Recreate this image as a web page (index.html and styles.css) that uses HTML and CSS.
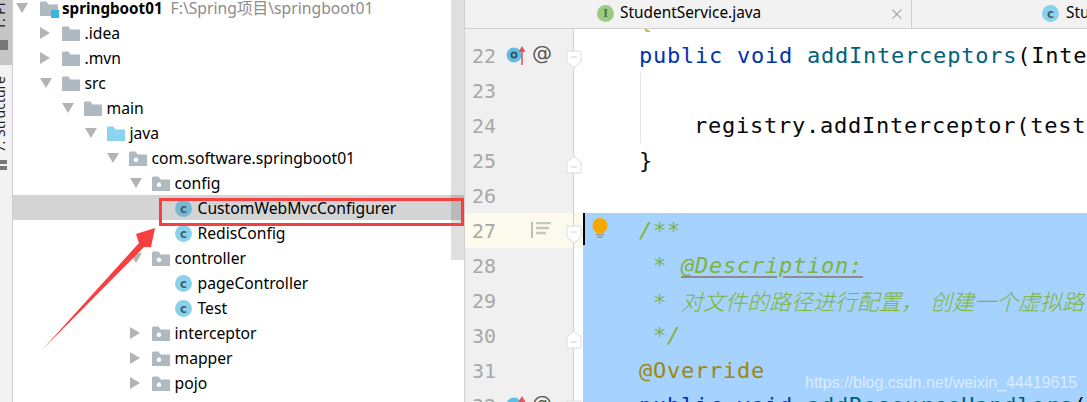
FILE: index.html
```html
<!DOCTYPE html>
<html lang="en">
<head>
<meta charset="utf-8">
<title>IDE</title>
<link rel="stylesheet" href="styles.css">
</head>
<body>
<svg class="sprite" aria-hidden="true">
  <symbol id="down" viewBox="0 0 12 10"><path d="M0 0H12L6 10Z"/></symbol>
  <symbol id="right" viewBox="0 0 10 12"><path d="M0 0V12L10 6Z"/></symbol>
  <symbol id="folder" viewBox="0 0 18 15"><path d="M0 1.5V15H18V3.5H8.5L6.5 .5H1Z"/></symbol>
  <symbol id="pkg" viewBox="0 0 18 15"><path fill-rule="evenodd" d="M0 1.5V15H18V3.5H8.5L6.5 .5H1ZM7 6.5a2.3 2.3 0 1 0 .01 0Z"/></symbol>
  <symbol id="foldd" viewBox="0 0 16 19"><path d="M1 1H15V12L8 18L1 12Z" fill="#fff" stroke="#dcdcdc"/><path d="M5 7H11" stroke="#cfcfcf"/></symbol>
  <symbol id="foldu" viewBox="0 0 16 19"><path d="M1 18H15V7L8 1L1 7Z" fill="#fff" stroke="#dcdcdc"/><path d="M5 12H11" stroke="#cfcfcf"/></symbol>
</svg>
<div class="app">
  <aside class="stripe">
    <div class="stripe-active">
      <span class="vtext">1: Project</span>
      <i class="stripe-ico"></i>
    </div>
    <div class="stripe-rest">
      <span class="vtext">7: Structure</span>
      <i class="stripe-dots"></i>
    </div>
  </aside>

  <section class="project">
    <div class="tree">
      <div class="row l0"><svg class="arrow ad"><use href="#down"/></svg><span class="ico mod"><svg class="fold grey"><use href="#folder"/></svg><i class="mod-badge"></i></span><b class="bold">springboot01</b><span class="path">F:\Spring项目\springboot01</span></div>
      <div class="row l1"><svg class="arrow ar"><use href="#right"/></svg><span class="ico"><svg class="fold grey"><use href="#folder"/></svg></span><span>.idea</span></div>
      <div class="row l1"><svg class="arrow ar"><use href="#right"/></svg><span class="ico"><svg class="fold grey"><use href="#folder"/></svg></span><span>.mvn</span></div>
      <div class="row l1"><svg class="arrow ad"><use href="#down"/></svg><span class="ico"><svg class="fold grey"><use href="#folder"/></svg></span><span>src</span></div>
      <div class="row l2"><svg class="arrow ad"><use href="#down"/></svg><span class="ico"><svg class="fold grey"><use href="#folder"/></svg></span><span>main</span></div>
      <div class="row l3"><svg class="arrow ad"><use href="#down"/></svg><span class="ico"><svg class="fold blue"><use href="#folder"/></svg></span><span>java</span></div>
      <div class="row l4"><svg class="arrow ad"><use href="#down"/></svg><span class="ico"><svg class="fold grey"><use href="#pkg"/></svg></span><span>com.software.springboot01</span></div>
      <div class="row l5"><svg class="arrow ad"><use href="#down"/></svg><span class="ico"><svg class="fold grey"><use href="#pkg"/></svg></span><span>config</span></div>
      <div class="row l6 selected"><span class="arrow"></span><span class="ico"><i class="cls dim">c</i></span><span>CustomWebMvcConfigurer</span></div>
      <div class="row l6"><span class="arrow"></span><span class="ico"><i class="cls">c</i></span><span>RedisConfig</span></div>
      <div class="row l5"><svg class="arrow ad"><use href="#down"/></svg><span class="ico"><svg class="fold grey"><use href="#pkg"/></svg></span><span>controller</span></div>
      <div class="row l6"><span class="arrow"></span><span class="ico"><i class="cls">c</i></span><span>pageController</span></div>
      <div class="row l6"><span class="arrow"></span><span class="ico"><i class="cls">c</i></span><span>Test</span></div>
      <div class="row l5"><svg class="arrow ar"><use href="#right"/></svg><span class="ico"><svg class="fold grey"><use href="#pkg"/></svg></span><span>interceptor</span></div>
      <div class="row l5"><svg class="arrow ar"><use href="#right"/></svg><span class="ico"><svg class="fold grey"><use href="#pkg"/></svg></span><span>mapper</span></div>
      <div class="row l5"><svg class="arrow ar"><use href="#right"/></svg><span class="ico"><svg class="fold grey"><use href="#pkg"/></svg></span><span>pojo</span></div>
    </div>
    <div class="thumb"></div>
  </section>

  <main class="editor">
    <nav class="tabs">
      <div class="tab tab-one"><i class="cls iface">I</i><span>StudentService.java</span><span class="close">×</span></div>
      <div class="tab tab-two"><i class="cls">c</i><span>StudentController.java</span></div>
    </nav>
    <div class="lines">
      <div class="line"><div class="gutter"></div><div class="code"><span class="brace">{</span></div></div>
      <div class="line"><div class="gutter"><span class="num">22</span><svg class="over" viewBox="0 0 22 20"><circle cx="8" cy="10" r="7.5" fill="#62bde3"/><circle cx="8" cy="10" r="2.6" fill="none" stroke="#33505f" stroke-width="1.8"/><path d="M16 20V6" stroke="#e0545f" stroke-width="1.6"/><path d="M12.5 7L16 1L19.5 7Z" fill="#e0545f"/></svg><span class="at">@</span><svg class="fi"><use href="#foldd"/></svg></div><div class="code"><span class="kw">public void</span> <span class="fn">addInterceptors</span>(Inte</div></div>
      <div class="line"><div class="gutter"><span class="num">23</span></div><div class="code"><span class="guide"></span></div></div>
      <div class="line"><div class="gutter"><span class="num">24</span></div><div class="code"><span class="guide"></span>    registry.addInterceptor(test</div></div>
      <div class="line"><div class="gutter"><span class="num">25</span><svg class="fi"><use href="#foldu"/></svg></div><div class="code">}</div></div>
      <div class="line"><div class="gutter"><span class="num">26</span></div><div class="code"></div></div>
      <div class="line current"><div class="gutter"><span class="num">27</span><svg class="impl" viewBox="0 0 20 16"><path d="M1 0V16" stroke="#b9c0b9" stroke-width="2"/><path d="M5 1H20M5 6H18M5 11H15" stroke="#c2c8c2" stroke-width="2.4"/></svg><svg class="fi"><use href="#foldd"/></svg></div><div class="code sel"><i class="caret"></i><svg class="bulb" viewBox="0 0 16 20"><path d="M8 0a7.5 7.5 0 0 0-4 13.8V15H12V13.8A7.5 7.5 0 0 0 8 0Z" fill="#f4a800"/><path d="M4 16.5H12M5 19H11" stroke="#8d9aa5" stroke-width="1.6"/></svg><span class="doc">/**</span></div></div>
      <div class="line"><div class="gutter"><span class="num">28</span></div><div class="code sel"><span class="doc"> * <u class="tag">@Description:</u></span></div></div>
      <div class="line"><div class="gutter"><span class="num">29</span></div><div class="code sel"><span class="doc"> * <span class="cjk">对文件的路径进行配置， 创建一个虚拟路径</span></span></div></div>
      <div class="line"><div class="gutter"><span class="num">30</span><svg class="fi"><use href="#foldu"/></svg></div><div class="code sel"><span class="doc"> */</span></div></div>
      <div class="line"><div class="gutter"><span class="num">31</span></div><div class="code sel"><span class="anno">@Override</span></div></div>
      <div class="line"><div class="gutter"><span class="num">32</span><svg class="over" viewBox="0 0 22 20"><circle cx="8" cy="10" r="7.5" fill="#62bde3"/><path d="M16 20V6" stroke="#e0545f" stroke-width="1.6"/><path d="M12.5 7L16 1L19.5 7Z" fill="#e0545f"/></svg><span class="at">@</span><svg class="fi"><use href="#foldd"/></svg></div><div class="code sel"><span class="kw">public void</span> <span class="fn">addResourceHandlers</span>(</div></div>
    </div>
  </main>
</div>

<div class="redbox"></div>
<svg class="redarrow" viewBox="0 0 130 135"><path d="M2 124L99 17L96 8L115 2L111 21L104 21Z" fill="#f63f3f"/></svg>
<div class="watermark">https://blog.csdn.net/weixin_44419615</div>
</body>
</html>
```
FILE: styles.css
```css
* { box-sizing: border-box; }
html, body { margin: 0; padding: 0; height: 402px; overflow: hidden; background: #fff; }
body { position: relative; font-family: "Noto Sans", "Noto Sans CJK SC", sans-serif; font-size: 15.7px; color: #000; }
.sprite { display: none; }
i { font-style: normal; }

.app { display: flex; width: 1087px; height: 402px; overflow: hidden; }

/* tool window stripe */
.stripe { width: 13px; flex: none; background: #f2f2f2; border-right: 1px solid #cfcfcf; display: flex; flex-direction: column; overflow: hidden; }
.stripe-active { height: 65px; flex: none; background: #c6c6c6; display: flex; flex-direction: column; align-items: flex-start; justify-content: flex-end; overflow: hidden; padding-bottom: 15px; }
.stripe-rest { display: flex; flex-direction: column; padding-top: 11px; align-items: flex-start; }
.vtext { writing-mode: vertical-rl; transform: rotate(180deg); font-size: 14px; line-height: 16px; margin-left: -8px; white-space: nowrap; color: #222; flex: none; }
.stripe-ico { width: 8px; height: 10px; background: #777; margin-top: 10px; flex: none; }
.stripe-dots { width: 7px; height: 11px; margin-top: 8px; background: repeating-linear-gradient(#777 0 4px, transparent 4px 6px); }

/* project tree */
.project { width: 452px; flex: none; position: relative; overflow: hidden; border-right: 1px solid #d0d0d0; }
.tree { margin-top: -5px; }
.row { height: 25px; display: flex; align-items: center; white-space: nowrap; }
.l0 { padding-left: 3px; }
.l1 { padding-left: 27px; }
.l2 { padding-left: 49px; }
.l3 { padding-left: 72px; }
.l4 { padding-left: 94px; }
.l5 { padding-left: 117px; }
.l6 { padding-left: 140px; }
.selected { background: #d4d4d4; }
.arrow { flex: none; width: 22px; height: 11px; fill: #b4b4b4; display: block; }
.ad { width: 12px; height: 10px; margin-right: 10px; }
.ar { width: 10px; height: 12px; margin-right: 12px; }
.l0 .ad { margin-right: 12px; }
.l0 .ico { width: 22px; }
.ico { flex: none; width: 22.5px; height: 18px; display: flex; align-items: center; position: relative; top: 1px; }
.fold { width: 18px; height: 15px; display: block; }
.grey { fill: #aeb9c0; }
.blue { fill: #8cd3ee; }
.mod-badge { position: absolute; left: 11px; top: 10px; width: 8px; height: 8px; background: #3eb4e0; }
.cls { width: 17px; height: 17px; border-radius: 50%; background: #8ad1ec; color: #3f5a68; display: flex; align-items: center; justify-content: center; font-family: "DejaVu Sans Mono", monospace; font-size: 13px; line-height: 15px; font-weight: 700; flex: none; }
.dim { background: #74b9d4; }
.iface { background: #9ccb82; color: #4d6b41; font-family: "Liberation Serif", serif; font-size: 12px; }
.bold { font-weight: 700; font-size: 15.2px; }
.path { color: #8c8c8c; margin-left: 8px; }
.thumb { position: absolute; right: 0; top: 0; width: 13px; height: 260px; background: rgba(0,0,0,.12); }

/* editor */
.editor { flex: 1; min-width: 0; display: flex; flex-direction: column; overflow: hidden; }
.tabs { height: 29px; flex: none; display: flex; background: #f2f2f2; border-bottom: 1px solid #d0d0d0; position: relative; z-index: 1; }
.tab { display: flex; align-items: center; white-space: nowrap; font-size: 15.4px; gap: 6px; line-height: 26px; padding-bottom: 2px; }
.tab-one { width: 447px; padding-left: 132px; border-right: 1px solid #d0d0d0; flex: none; }
.close { color: #a8a8a8; font-size: 22px; margin-left: auto; margin-right: 8px; font-weight: 300; }
.tab-two { padding-left: 130px; gap: 7px; }
.lines { margin-top: -26px; }
.line { height: 35px; display: flex; width: 622px; }
.gutter { width: 109px; flex: none; background: #f0f0f0; border-right: 1px solid #d0d0d0; position: relative; display: flex; align-items: center; padding-left: 7px; }
.num { font-family: "DejaVu Sans Mono", monospace; font-size: 20px; color: #a8a8a8; }
.over { position: absolute; left: 41px; top: 7px; width: 22px; height: 20px; }
.at { position: absolute; left: 67px; top: 3px; font-family: "DejaVu Sans", sans-serif; font-size: 20px; color: #555; line-height: 24px; }
.impl { position: absolute; left: 66px; top: 9px; width: 20px; height: 16px; }
.fi { position: absolute; left: 101px; top: 12px; width: 16px; height: 19px; z-index: 1; }
.code { flex: 1; position: relative; padding-left: 65px; font-family: "DejaVu Sans Mono", "Noto Sans CJK SC", monospace; font-size: 22px; letter-spacing: .76px; line-height: 35px; white-space: pre; color: #080808; overflow: hidden; }
.current { background: #fcfaed; }
.current .gutter { background: transparent; }
.sel { margin-left: 9px; padding-left: 56px; background: #a6d2ff; }
.kw { color: #0033b3; }
.fn { color: #00627a; }
.brace { color: #c8ac3c; }
.guide { display: inline-block; height: 35px; width: 0; border-left: 1px solid #e4e4e4; vertical-align: top; margin-left: 1px; margin-right: -3px; }
.doc { color: #7fb238; font-style: italic; }
.tag { text-decoration-color: #8c8c8c; text-underline-offset: 3px; }
.cjk { font-family: "Noto Sans CJK SC", sans-serif; font-size: 22px; letter-spacing: 0; word-spacing: 2px; font-weight: 300; }
.anno { color: #9e880d; }
.caret { position: absolute; left: 0; top: 0; width: 2px; height: 32px; background: #000; }
.bulb { position: absolute; left: 9px; top: 5px; width: 16px; height: 20px; }

/* annotations drawn over the screenshot */
.redbox { position: absolute; left: 159px; top: 198px; width: 305px; height: 28px; border: 3px solid #f63f3f; }
.redarrow { position: absolute; left: 40px; top: 226px; width: 130px; height: 135px; overflow: visible; }
.watermark { position: absolute; left: 805px; top: 372px; font-family: "Liberation Sans", sans-serif; font-size: 16px; line-height: 22px; color: rgba(255,255,255,.6); white-space: nowrap; }
```
